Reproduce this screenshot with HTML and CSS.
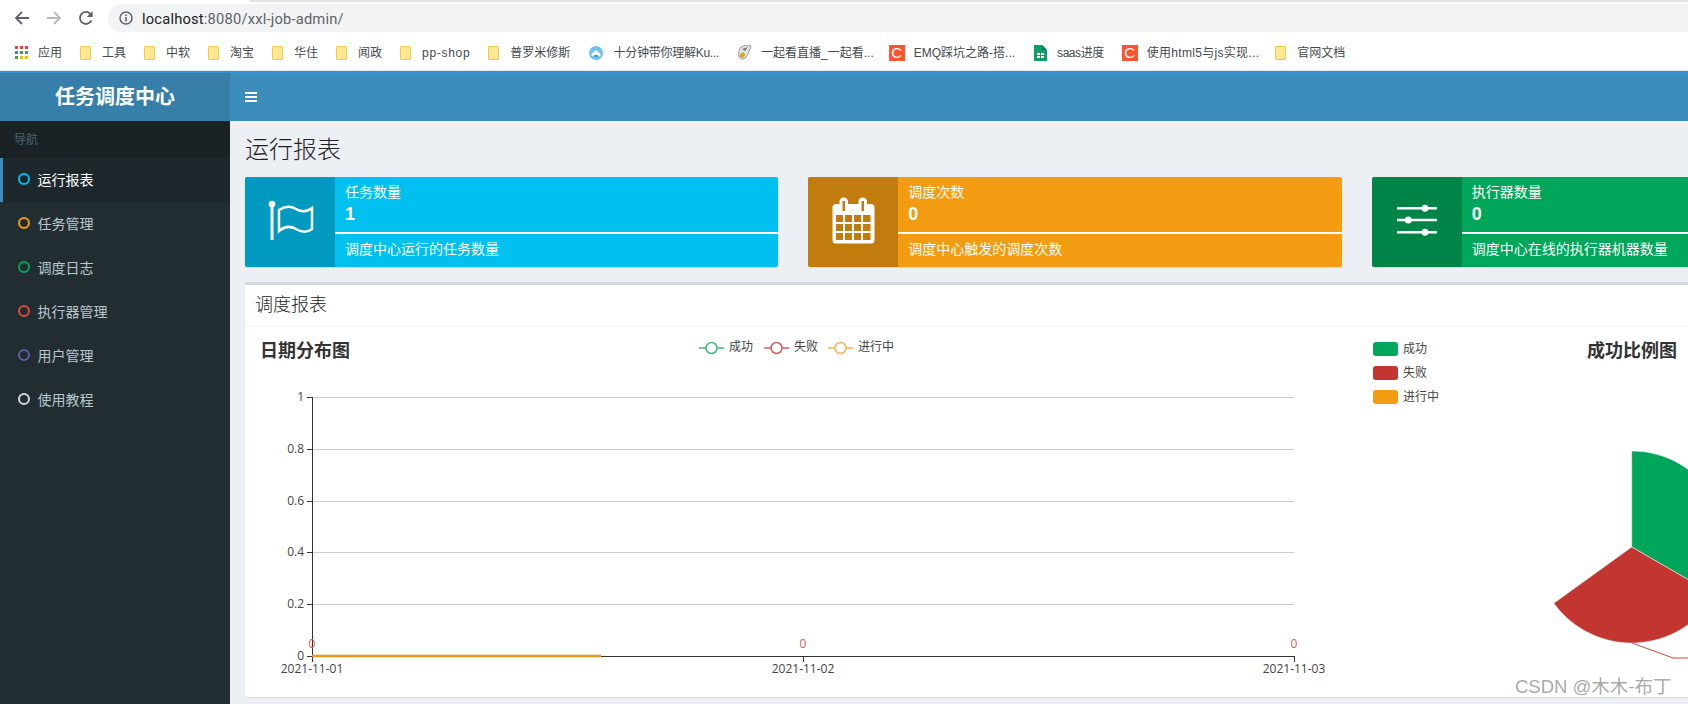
FILE: index.html
```html
<!DOCTYPE html>
<html lang="zh-CN">
<head>
<meta charset="utf-8">
<title>任务调度中心</title>
<link rel="stylesheet" href="styles.css">
</head>
<body>
<div class="viewport">
  <div class="tabstrip"><span class="tab-active"></span><span class="tab-rest"></span></div>
  <div class="toolbar">
    <svg class="nav-icon" viewBox="0 0 16 16"><path d="M15 8H2.5M8 2 2 8l6 6" fill="none" stroke="#5f6368" stroke-width="1.8"/></svg>
    <svg class="nav-icon" viewBox="0 0 16 16"><path d="M1 8h12.5M8 2l6 6-6 6" fill="none" stroke="#b8b9ba" stroke-width="1.8"/></svg>
    <svg class="nav-icon" viewBox="0 0 16 16"><path d="M13.4 10.5A6 6 0 1 1 12.3 3.8" fill="none" stroke="#5f6368" stroke-width="1.8"/><path d="M14.6 1v6h-6z" fill="#5f6368"/></svg>
    <div class="omnibox">
      <svg class="info-icon" viewBox="0 0 14 14"><circle cx="7" cy="7" r="6" fill="none" stroke="#5f6368" stroke-width="1.5"/><path d="M6.2 6h1.6v4.4H6.2zM6.2 3.4h1.6V5H6.2z" fill="#5f6368"/></svg>
      <span class="url"><span class="url-host">localhost</span>:8080/xxl-job-admin/</span>
    </div>
  </div>
  <div class="bookmarks">
    <a class="bm"><svg class="apps" viewBox="0 0 13 13"><rect width="3" height="3" fill="#ea4335"/><rect x="5" width="3" height="3" fill="#ea4335"/><rect x="10" width="3" height="3" fill="#ea4335"/><rect y="5" width="3" height="3" fill="#4285f4"/><rect x="5" y="5" width="3" height="3" fill="#34a853"/><rect x="10" y="5" width="3" height="3" fill="#4285f4"/><rect y="10" width="3" height="3" fill="#34a853"/><rect x="5" y="10" width="3" height="3" fill="#fbbc05"/><rect x="10" y="10" width="3" height="3" fill="#fbbc05"/></svg>应用</a>
    <a class="bm"><span class="folder"></span>工具</a>
    <a class="bm"><span class="folder"></span>中软</a>
    <a class="bm"><span class="folder"></span>淘宝</a>
    <a class="bm"><span class="folder"></span>华住</a>
    <a class="bm"><span class="folder"></span>闻政</a>
    <a class="bm bm-pp"><span class="folder"></span>pp-shop</a>
    <a class="bm"><span class="folder"></span>普罗米修斯</a>
    <a class="bm bm-fav"><svg class="fav" viewBox="0 0 16 16"><circle cx="8" cy="8" r="7" fill="#6cc4ee"/><path d="M3 9.5 8 5l5 4.5-2 2H5z" fill="#fff"/><path d="M6 10h4v2H6z" fill="#2f9fe0"/><path d="M7 14h3l-1 2z" fill="#6cc4ee"/></svg><span class="t-ku">十分钟带你理解Ku...</span></a>
    <a class="bm bm-fav bm-tight"><svg class="fav" viewBox="0 0 16 16"><path d="M5 2c3-2 8-2 10-1-1 4-3 9-6 12-2 2-5 1-6-1-1-3 0-8 2-10z" fill="#e3e3e3" stroke="#9a9a9a"/><path d="M4 9l4-2 1 3-2 3-3-1z" fill="#d9a21a"/><path d="M6 4l6-2-3 4z" fill="#777"/></svg><span>一起看直播_一起看...</span></a>
    <a class="bm bm-fav"><span class="csdn">C</span><span>EMQ踩坑之路-搭...</span></a>
    <a class="bm bm-sheet"><svg class="sheet" viewBox="0 0 14 16"><path d="M1 0h8l5 5v11H1z" fill="#0f9d68"/><path d="M9 0l5 5H9z" fill="#0b7d52"/><path d="M4 8h3v2H4zm4 0h3v2H8zm-4 3h3v2H4zm4 0h3v2H8z" fill="#fff"/></svg><span class="t-saas">saas进度</span></a>
    <a class="bm bm-fav"><span class="csdn">C</span><span class="t-html">使用html5与js实现...</span></a>
    <a class="bm"><span class="folder"></span>官网文档</a>
  </div>

  <div class="app">
    <header class="topbar">
      <div class="logo">任务调度中心</div>
      <nav class="navbar"><span class="burger"><i></i><i></i><i></i></span></nav>
    </header>
    <div class="layout">
      <aside class="sidebar">
        <div class="side-head">导航</div>
        <ul class="menu">
          <li class="menu-item active"><span class="ring ring-cyan"></span>运行报表</li>
          <li class="menu-item"><span class="ring ring-orange"></span>任务管理</li>
          <li class="menu-item"><span class="ring ring-green"></span>调度日志</li>
          <li class="menu-item"><span class="ring ring-red"></span>执行器管理</li>
          <li class="menu-item"><span class="ring ring-purple"></span>用户管理</li>
          <li class="menu-item"><span class="ring ring-gray"></span>使用教程</li>
        </ul>
      </aside>
      <main class="main">
        <h1 class="page-title">运行报表</h1>
        <section class="cards">
          <article class="card card-cyan">
            <div class="card-icon">
              <svg viewBox="0 0 90 90"><circle cx="27" cy="27" r="3.3" fill="#fff"/><path d="M27 27v36" stroke="#fff" stroke-width="3" fill="none"/><path d="M34 33c6-4 12-4 17-1s11 3 16-1v21c-5 4-11 3-16 0s-11-3-17 2z" fill="none" stroke="#fff" stroke-width="2.5"/></svg>
            </div>
            <div class="card-body">
              <div class="card-label">任务数量</div>
              <div class="card-num">1</div>
              <div class="card-line"></div>
              <div class="card-desc">调度中心运行的任务数量</div>
            </div>
          </article>
          <article class="card card-orange">
            <div class="card-icon">
              <svg viewBox="0 0 90 90"><rect x="24.5" y="27" width="42" height="39.5" rx="3.5" fill="#fff"/><g fill="#c27c0e"><rect x="28" y="38" width="7" height="7"/><rect x="37" y="38" width="7" height="7"/><rect x="46" y="38" width="7" height="7"/><rect x="55" y="38" width="7.500" height="7"/><rect x="28" y="47" width="7" height="7"/><rect x="37" y="47" width="7" height="7"/><rect x="46" y="47" width="7" height="7"/><rect x="55" y="47" width="7.500" height="7"/><rect x="28" y="56" width="7" height="7"/><rect x="37" y="56" width="7" height="7"/><rect x="46" y="56" width="7" height="7"/><rect x="55" y="56" width="7.500" height="7"/></g><rect x="31.500" y="20.500" width="8.500" height="15" rx="4.200" fill="#fff"/><rect x="50.500" y="20.500" width="8.500" height="15" rx="4.200" fill="#fff"/><rect x="34.500" y="24" width="2.500" height="10" fill="#c27c0e"/><rect x="53.500" y="24" width="2.500" height="10" fill="#c27c0e"/></svg>
            </div>
            <div class="card-body">
              <div class="card-label">调度次数</div>
              <div class="card-num">0</div>
              <div class="card-line"></div>
              <div class="card-desc">调度中心触发的调度次数</div>
            </div>
          </article>
          <article class="card card-green">
            <div class="card-icon">
              <svg viewBox="0 0 90 90"><path d="M25 31.300h40M25 43h40M25 55.300h40" stroke="#fff" stroke-width="2.600" fill="none"/><circle cx="53" cy="31.300" r="3.500" fill="#fff"/><circle cx="36.300" cy="43" r="3.500" fill="#fff"/><circle cx="53" cy="55.300" r="3.500" fill="#fff"/></svg>
            </div>
            <div class="card-body">
              <div class="card-label">执行器数量</div>
              <div class="card-num">0</div>
              <div class="card-line"></div>
              <div class="card-desc">调度中心在线的执行器机器数量</div>
            </div>
          </article>
        </section>
        <section class="box">
          <h2 class="box-title">调度报表</h2>
          <svg class="chart" viewBox="245 327 1660 370">
            <text class="chart-title" x="260" y="357">日期分布图</text>
            <g class="legend-text">
              <path class="s-green" d="M699 348h25"/><circle class="s-green dot" cx="711.500" cy="348" r="5.500"/><text x="729" y="351">成功</text>
              <path class="s-red" d="M764 348h25"/><circle class="s-red dot" cx="776.500" cy="348" r="5.500"/><text x="794" y="351">失败</text>
              <path class="s-orange" d="M828 348h25"/><circle class="s-orange dot" cx="840.500" cy="348" r="5.500"/><text x="858" y="351">进行中</text>
            </g>
            <g class="grid">
              <path d="M312 397.500h982M312 449.500h982M312 501.500h982M312 552.500h982M312 604.500h982"/>
            </g>
            <g class="axis">
              <path d="M312.500 397v264M307 397.500h5M307 449.500h5M307 501.500h5M307 552.500h5M307 604.500h5M307 656.500h988M312.500 656v6M803.500 656v6M1294.500 656v6"/>
            </g>
            <g class="tick-y">
              <text x="304" y="401">1</text><text x="304" y="453">0.8</text><text x="304" y="505">0.6</text><text x="304" y="556">0.4</text><text x="304" y="608">0.2</text><text x="304" y="660">0</text>
            </g>
            <g class="tick-x">
              <text x="312" y="673">2021-11-01</text><text x="803" y="673">2021-11-02</text><text x="1294" y="673">2021-11-03</text>
            </g>
            <g class="point-label">
              <text x="312" y="648">0</text><text x="803" y="648">0</text><text x="1294" y="648">0</text>
            </g>
            <path class="run-line" d="M312 656h289"/>
            <g class="legend-text">
              <rect class="f-green" x="1373" y="342" width="25" height="14" rx="3"/><text x="1403" y="353">成功</text>
              <rect class="f-red" x="1373" y="366" width="25" height="14" rx="3"/><text x="1403" y="377">失败</text>
              <rect class="f-orange" x="1373" y="390" width="25" height="14" rx="3"/><text x="1403" y="401">进行中</text>
            </g>
            <text class="chart-title" x="1587" y="357">成功比例图</text>
            <path class="f-green slice" d="M1631.700 547V451A96 96 0 0 1 1714.800 595Z"/>
            <path class="f-red slice" d="M1631.700 547L1714.800 595A96 96 0 0 1 1553.800 603.200Z"/>
            <path class="label-line" d="M1632 643l41 15h40"/>
          </svg>
        </section>
      </main>
    </div>
  </div>
  <div class="watermark">CSDN @木木-布丁</div>
</div>
</body>
</html>
```
FILE: styles.css
```css
* { box-sizing: border-box; }
html, body { margin: 0; padding: 0; height: 100%; overflow: hidden; background: #fff; }
body { font-family: "Liberation Sans", "Noto Sans CJK SC", sans-serif; color: #333; }
.viewport { position: relative; width: 1688px; height: 704px; overflow: hidden; }

.tabstrip { display: flex; height: 2px; }
.tab-active { width: 250px; background: #fff; }
.tab-rest { flex: 1; background: #dee1e6; }

.toolbar { display: flex; align-items: center; height: 34px; padding-left: 14px; padding-bottom: 2px; gap: 16px; background: #fff; }
.nav-icon { width: 16px; height: 16px; flex: none; }
.omnibox { display: flex; align-items: center; flex: 1; height: 28px; margin-left: -2px; padding-left: 11px; border-radius: 14px 0 0 14px; background: #f1f3f4; gap: 9px; }
.info-icon { width: 14px; height: 14px; flex: none; }
.url { font: 14.7px/28px Roboto, "Liberation Sans", sans-serif; color: #5f6368; letter-spacing: .2px; position: relative; top: 1px; }
.url-host { color: #202124; }

.bookmarks { display: flex; align-items: center; height: 35px; padding: 0 0 1px 15px; gap: 18px; background: #fff; border-bottom: 1px solid #e3e5e8; }
.bm { display: flex; align-items: center; gap: 11px; flex: none; font-size: 12px; line-height: 16px; color: #45494d; white-space: nowrap; }
.bm-fav { gap: 9px; }
.bm-sheet { gap: 10px; }
.bm-pp { letter-spacing: .7px; }
.bm-tight { margin-right: -3px; }
.t-ku { letter-spacing: -.25px; margin-right: -1px; }
.t-saas { letter-spacing: -.45px; }
.t-html { letter-spacing: .3px; margin-right: -2px; }
.apps { width: 13px; height: 13px; margin-right: -1px; }
.fav { width: 16px; height: 16px; }
.sheet { width: 14px; height: 16px; }
.folder { position: relative; display: block; width: 11px; height: 14px; background: #ffe792; border: 1px solid #f0c94f; border-radius: 1px; }
.csdn { display: block; width: 16px; height: 16px; background: #fc5531; color: #fff; font: 15px/16px "Liberation Sans", sans-serif; text-align: center; }

.app { width: 1920px; }
.topbar { display: flex; height: 50px; border-top: 2px solid #2e97de; }
.logo { width: 230px; background: #367fa9; color: #fff; font-size: 20px; font-weight: 700; line-height: 49px; text-align: center; }
.navbar { flex: 1; display: flex; align-items: center; padding-left: 15px; background: #3c8dbc; }
.burger { display: flex; flex-direction: column; gap: 2px; width: 12px; }
.burger i { display: block; height: 2px; background: #fff; }

.layout { display: flex; height: 583px; }
.sidebar { width: 230px; flex: none; background: #222d32; }
.side-head { height: 37px; padding-left: 14px; background: #1a2226; color: #4b646f; font-size: 12px; line-height: 38px; }
.menu { list-style: none; margin: 0; padding: 0; }
.menu-item { display: flex; align-items: center; height: 44px; padding: 0 0 2px 18px; color: #b8c7ce; font-size: 14px; gap: 7.500px; }
.menu-item.active { padding-left: 15px; border-left: 3px solid #3c8dbc; background: #1e282c; color: #fff; }
.ring { width: 12px; height: 12px; border-radius: 50%; border: 2.200px solid; flex: none; }
.ring-cyan { border-color: #00c0ef; }
.ring-orange { border-color: #f39c12; }
.ring-green { border-color: #00a65a; }
.ring-red { border-color: #dd4b39; }
.ring-purple { border-color: #605ca8; }
.ring-gray { border-color: #d2d6de; }

.main { width: 1690px; flex: none; padding: 15px 15px 0; background: #ecf0f5; }
.page-title { margin: 0 0 13px; font-size: 24px; line-height: 28px; font-weight: 300; color: #222; }

.cards { display: grid; grid-template-columns: repeat(3, 1fr); gap: 30px; margin-bottom: 15px; }
.card { display: flex; height: 90px; border-radius: 2px; color: #fff; box-shadow: 0 1px 1px rgba(0,0,0,.1); overflow: hidden; }
.card-cyan { background: #00c0ef; }
.card-orange { background: #f39c12; }
.card-green { background: #00a65a; }
.card-icon { width: 90px; height: 90px; flex: none; background: rgba(0,0,0,.2); }
.card-icon svg { display: block; width: 90px; height: 90px; }
.card-body { flex: 1; padding-top: 5px; }
.card-label, .card-desc { padding-left: 10px; font-size: 14px; line-height: 20px; }
.card-num { padding-left: 10px; font-size: 18px; font-weight: 700; line-height: 24px; }
.card-line { height: 2px; margin-top: 6px; background: #fff; }
.card-desc { margin-top: 5px; }

.box { height: 415px; border-top: 3px solid #d2d6de; border-radius: 3px; background: #fff; box-shadow: 0 1px 1px rgba(0,0,0,.1); }
.box-title { margin: 0; height: 42px; padding-left: 10px; border-bottom: 1px solid #f4f4f4; font-size: 18px; font-weight: 300; line-height: 41px; color: #222; }
.chart { display: block; width: 1660px; height: 370px; font-family: "Open Sans", "Noto Sans CJK SC", sans-serif; }
.chart-title { font-family: "Liberation Sans", "Noto Sans CJK SC", sans-serif; font-size: 18px; font-weight: 700; fill: #333; }
.legend-text text { font-size: 12px; fill: #444; }
.s-green, .s-red, .s-orange { fill: none; stroke-width: 1.500px; }
.dot { fill: #fff; }
.s-green { stroke: #3cb97f; }
.s-red { stroke: #cf5d5a; }
.s-orange { stroke: #f7b34f; }
.f-green { fill: #00a65a; }
.f-red { fill: #c23531; }
.f-orange { fill: #f39c12; }
.slice { stroke: #fff; stroke-width: .5px; }
.grid path { fill: none; stroke: #ccc; stroke-width: 1px; }
.axis path { fill: none; stroke: #333; stroke-width: 1px; }
.tick-y text { font-size: 12px; fill: #444; text-anchor: end; }
.tick-x text { font-size: 12px; fill: #444; text-anchor: middle; }
.point-label text { font-size: 12px; fill: #e05a56; text-anchor: middle; }
.run-line { fill: none; stroke: #e8971c; stroke-width: 2.500px; }
.label-line { fill: none; stroke: #c94a46; stroke-width: 1px; }

.watermark { position: absolute; left: 1515px; top: 674px; font-size: 18.500px; line-height: 26px; color: rgba(130,130,130,.7); white-space: nowrap; }
```
